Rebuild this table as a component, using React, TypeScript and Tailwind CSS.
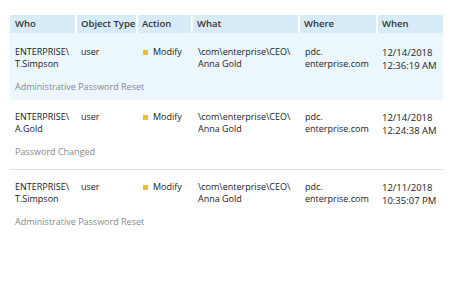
const columns = ["Who", "Object Type", "Action", "What", "Where", "When"]

const rows = [
  {
    who: ["ENTERPRISE\\", "T.Simpson"],
    type: "user",
    action: "Modify",
    what: ["\\com\\enterprise\\CEO\\", "Anna Gold"],
    where: ["pdc.", "enterprise.com"],
    when: ["12/14/2018", "12:36:19 AM"],
    note: "Administrative Password Reset",
    selected: true,
  },
  {
    who: ["ENTERPRISE\\", "A.Gold"],
    type: "user",
    action: "Modify",
    what: ["\\com\\enterprise\\CEO\\", "Anna Gold"],
    where: ["pdc.", "enterprise.com"],
    when: ["12/14/2018", "12:24:38 AM"],
    note: "Password Changed",
    selected: false,
  },
  {
    who: ["ENTERPRISE\\", "T.Simpson"],
    type: "user",
    action: "Modify",
    what: ["\\com\\enterprise\\CEO\\", "Anna Gold"],
    where: ["pdc.", "enterprise.com"],
    when: ["12/11/2018", "10:35:07 PM"],
    note: "Administrative Password Reset",
    selected: false,
  },
]

const grid = "grid grid-cols-[65px_59px_53px_105px_76px_65px] gap-x-[2px]"

function Lines({ lines }: { lines: string[] }) {
  return (
    <div className="flex flex-col">
      {lines.map((l, i) => (
        <span key={i} className="leading-[12px] whitespace-nowrap">{l}</span>
      ))}
    </div>
  )
}

export default function App() {
  return (
    <div
      className="w-[450px] h-[300px] bg-white pt-[15px] pl-[10px] text-[#222]"
      style={{ fontFamily: '"Open Sans", "Noto Sans", sans-serif' }}
    >
      <div className="w-[433px]">
        <div className={grid}>
          {columns.map((c) => (
            <div
              key={c}
              className="bg-[#d8ebf8] h-[18px] flex items-center px-[4px] first:px-[5px] text-[9.5px] font-semibold text-[#333] whitespace-nowrap"
            >
              {c}
            </div>
          ))}
        </div>

        {rows.map((r, i) => (
          <div
            key={i}
            className={
              r.selected
                ? "bg-[#ebf6fd] pt-[13px] pb-[7px]"
                : "border-b border-[#dedede] pt-[11px] pb-[11px] last:border-b-0"
            }
          >
            {/* fixed height so the taller date lines don't push the note down */}
            <div className={grid + " h-[24px] text-[9px]"}>
              <div className="px-[5px]">
                <Lines lines={r.who} />
              </div>
              <div className="px-[4px]">
                <span className="leading-[12px] block">{r.type}</span>
              </div>
              <div className="px-[5px] flex items-start gap-[5px]">
                <span className="w-[5px] h-[5px] bg-[#f0be2c] mt-[4px]" />
                <span className="leading-[12px]">{r.action}</span>
              </div>
              <div className="px-[5px]">
                <Lines lines={r.what} />
              </div>
              <div className="px-[5px]">
                <Lines lines={r.where} />
              </div>
              <div className="px-[4px] pt-[1px] text-[9.5px]">
                <div className="flex flex-col">
                  {r.when.map((l, j) => (
                    <span key={j} className="leading-[12.5px] whitespace-nowrap">{l}</span>
                  ))}
                </div>
              </div>
            </div>
            <div className="pl-[5px] mt-[11px] text-[9px] leading-[12px] text-[#8a8a8a]">{r.note}</div>
          </div>
        ))}
      </div>
    </div>
  )
}
